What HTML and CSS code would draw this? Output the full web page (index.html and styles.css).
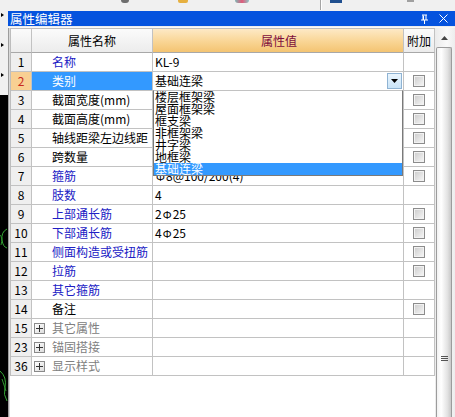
FILE: index.html
```html
<!DOCTYPE html>
<html lang="zh-CN">
<head>
<meta charset="utf-8">
<title>属性编辑器</title>
<link rel="stylesheet" href="styles.css">
</head>
<body>
<div class="topbar">
  <span class="tb-frag frag-a"></span>
  <span class="tb-frag frag-b"></span>
  <span class="tb-frag frag-c"></span>
  <span class="tb-sep"></span>
  <span class="tb-frag frag-d"></span>
  <span class="tb-frag frag-e"></span>
</div>
<div class="main">
  <div class="leftstrip">
    <div class="ls-gray">
      <svg width="8" height="84" viewBox="0 0 8 84"><path d="M1 2 L4 4 L1 6 Z M1 32 L4 34 L1 36 Z M1 62 L4 64 L1 66 Z" fill="#000"/></svg>
    </div>
    <div class="ls-black">
      <svg width="8" height="322" viewBox="0 0 8 322"><path d="M7 134 Q1 137 2 145 Q3 152 7 153" stroke="#35a835" fill="none"/><path d="M0 140 Q3 143 1 150" stroke="#2c8f2c" fill="none"/><path d="M0 276 Q7 282 5 292 Q3 300 7 306" stroke="#35a835" fill="none"/><path d="M2 284 L6 296" stroke="#2c8f2c" fill="none"/></svg>
    </div>
  </div>
  <div class="panel">
    <div class="titlebar">
      <span class="title">属性编辑器</span>
      <svg class="tb-pin" width="9" height="10" viewBox="0 0 9 10"><path d="M2 1 H7 M3 1 V6 M6 1 V6 M1 6 H8 M4.5 6 V10" stroke="#fff" fill="none"/><path d="M3 2 H4 V6 H3 Z" fill="#fff"/></svg>
      <svg class="tb-close" width="9" height="9" viewBox="0 0 9 9"><path d="M0.5 0.5 L8.5 8.5 M8.5 0.5 L0.5 8.5" stroke="#fff" stroke-width="1"/></svg>
    </div>
    <div class="sep"></div>
    <div class="content">
      <div class="gridwrap">
        <div class="grid">
          <div class="row head">
            <div class="c num"></div>
            <div class="c name hc">属性名称</div>
            <div class="c val hv">属性值</div>
            <div class="c add hc">附加</div>
          </div>
          <div class="row"><div class="c num">1</div><div class="c name blue">名称</div><div class="c val">KL-9</div><div class="c add"></div></div>
          <div class="row"><div class="c num cur">2</div><div class="c name sel">类别</div><div class="c val"><span>基础连梁</span><span class="ddbtn"><svg width="7" height="4" viewBox="0 0 7 4"><path d="M0 0 H7 L3.5 4 Z" fill="#000"/></svg></span></div><div class="c add"><span class="cb"></span></div></div>
          <div class="row"><div class="c num">3</div><div class="c name">截面宽度(mm)</div><div class="c val"></div><div class="c add"><span class="cb"></span></div></div>
          <div class="row"><div class="c num">4</div><div class="c name">截面高度(mm)</div><div class="c val"></div><div class="c add"><span class="cb"></span></div></div>
          <div class="row"><div class="c num">5</div><div class="c name">轴线距梁左边线距</div><div class="c val"></div><div class="c add"><span class="cb"></span></div></div>
          <div class="row"><div class="c num">6</div><div class="c name">跨数量</div><div class="c val"></div><div class="c add"><span class="cb"></span></div></div>
          <div class="row"><div class="c num">7</div><div class="c name blue">箍筋</div><div class="c val"><span class="bar">Φ</span>8@100/200(4)</div><div class="c add"><span class="cb"></span></div></div>
          <div class="row"><div class="c num">8</div><div class="c name blue">肢数</div><div class="c val">4</div><div class="c add"></div></div>
          <div class="row"><div class="c num">9</div><div class="c name blue">上部通长筋</div><div class="c val">2<span class="bar">Φ</span>25</div><div class="c add"><span class="cb"></span></div></div>
          <div class="row"><div class="c num">10</div><div class="c name blue">下部通长筋</div><div class="c val">4<span class="bar">Φ</span>25</div><div class="c add"><span class="cb"></span></div></div>
          <div class="row"><div class="c num">11</div><div class="c name blue">侧面构造或受扭筋</div><div class="c val"></div><div class="c add"><span class="cb"></span></div></div>
          <div class="row"><div class="c num">12</div><div class="c name blue">拉筋</div><div class="c val"></div><div class="c add"><span class="cb"></span></div></div>
          <div class="row"><div class="c num">13</div><div class="c name blue">其它箍筋</div><div class="c val"></div><div class="c add"></div></div>
          <div class="row"><div class="c num">14</div><div class="c name">备注</div><div class="c val"></div><div class="c add"><span class="cb"></span></div></div>
          <div class="row"><div class="c num">15</div><div class="c name grp"><span class="plus"></span>其它属性</div><div class="c val"></div><div class="c add"></div></div>
          <div class="row"><div class="c num">23</div><div class="c name grp"><span class="plus"></span>锚固搭接</div><div class="c val"></div><div class="c add"></div></div>
          <div class="row"><div class="c num">36</div><div class="c name grp"><span class="plus"></span>显示样式</div><div class="c val"></div><div class="c add"></div></div>
        </div>
        <ul class="dropdown">
          <li>楼层框架梁</li>
          <li>屋面框架梁</li>
          <li>框支梁</li>
          <li>非框架梁</li>
          <li>井字梁</li>
          <li>地框梁</li>
          <li class="hl">基础连梁</li>
        </ul>
      </div>
      <div class="scrollbar">
        <div class="sb-up"><svg width="7" height="4" viewBox="0 0 7 4"><path d="M0 4 H7 L3.5 0 Z" fill="#444"/></svg></div>
        <div class="sb-thumb"><div class="grip"></div></div>
      </div>
    </div>
  </div>
</div>
</body>
</html>
```
FILE: styles.css
```css
* { box-sizing: border-box; }
html, body { margin: 0; padding: 0; }
body {
  width: 455px;
  height: 417px;
  overflow: hidden;
  background: #f0f0f0;
  font-family: "Noto Sans CJK SC", "Noto Sans", sans-serif;
  font-size: 12px;
  color: #000;
}

/* toolbar remnants */
.topbar {
  height: 11px;
  display: flex;
  align-items: flex-start;
  background: #f0f0f0;
}
.tb-frag { display: block; height: 3px; }
.frag-a { margin-left: 121px; width: 8px; background: #6e6e6e; border-radius: 0 0 3px 3px; }
.frag-b { margin-left: 49px; width: 10px; background: #e6b040; border-radius: 0 0 2px 2px; }
.frag-c { margin-left: 47px; width: 14px; background: linear-gradient(to right, #7fb7b5, #e05a7a 50%, #8cc6c6); border-radius: 0 0 3px 3px; }
.tb-sep { display: block; margin-left: 71px; width: 2px; height: 10px; border-left: 1px solid #a5a5a5; border-right: 1px solid #fff; }
.frag-d { margin-left: 8px; width: 12px; background: #1f4f8f; }
.frag-e { margin-left: 65px; width: 7px; height: 2px; background: #a0a0a0; }

.main { display: flex; height: 406px; }

.leftstrip { width: 8px; display: flex; flex-direction: column; }
.ls-gray { height: 84px; background: #f0f0f0; }
.ls-black { flex: 1; background: #000; }
.leftstrip svg { display: block; }

.panel { flex: 1; display: flex; flex-direction: column; }

.titlebar {
  height: 15px;
  background: #0553de;
  color: #fff;
  display: flex;
  align-items: center;
  padding-left: 2px;
  font-size: 12.5px;
  line-height: 15px;
}
.titlebar .title { flex: 1; }
.tb-pin { margin-right: 10px; }
.tb-close { margin-right: 7px; }

.sep { height: 2px; background: #ececec; border-bottom: 1px solid #f8f8f8; }

.content {
  flex: 1;
  display: flex;
  background: #fff;
  border-left: 1px solid #9c9c9c;
  padding-left: 1px;
  box-shadow: inset 1px 0 #d8d8d8;
}

.gridwrap { position: relative; width: 425px; flex: none; }
.grid { border-left: 1px solid #bdbdbd; border-top: 1px solid #bdbdbd; }

.row {
  display: grid;
  grid-template-columns: 21px 121px 251px 31px;
  height: 19px;
}
.row.head { height: 24px; }

.c {
  border-right: 1px solid #c2c2c2;
  border-bottom: 1px solid #c2c2c2;
  display: flex;
  align-items: center;
  white-space: nowrap;
  overflow: hidden;
  line-height: 18px;
}

.head .c {
  background: linear-gradient(#fbfbfb, #ececec);
  border-bottom-color: #a8a8a8;
  justify-content: center;
}
.head .c.name { padding-left: 0; }
.head .hv {
  background: linear-gradient(#fde9c6, #f9d594 55%, #f4c472);
  color: #7d0c3c;
}

.num {
  justify-content: center;
  background: #efefef;
  font-size: 12px;
}
.num.cur { background: #f8d093; color: #c8281e; }

.name { padding-left: 20px; }
.name.blue { color: #2020c4; }
.name.sel { background: #3399ff; color: #fff; }
.name.grp { padding-left: 2px; color: #808080; }

.val { padding-left: 2px; }
.bar { display: inline-block; width: 11px; text-align: center; font-size: 11px; }

.ddbtn {
  margin-left: auto;
  margin-right: 1px;
  width: 15px;
  height: 16px;
  border: 1px solid #8fb3d3;
  background: linear-gradient(#eaf5fd, #c9e4f8);
  display: flex;
  align-items: center;
  justify-content: center;
}
.ddbtn svg { display: block; }

.add { justify-content: center; }
.cb {
  width: 12px;
  height: 12px;
  border: 1px solid #8c8c8c;
  background: linear-gradient(135deg, #cbcbcb, #f7f7f7);
  box-shadow: inset 0 0 0 1px #f2f2f2;
}

.plus {
  width: 11px;
  height: 11px;
  margin-right: 7px;
  border: 1px solid #8a8a8a;
  background: linear-gradient(135deg, #ffffff, #dcdcdc);
  position: relative;
}
.plus::before, .plus::after {
  content: "";
  position: absolute;
  background: #333;
}
.plus::before { left: 1px; right: 1px; top: 4px; height: 1px; }
.plus::after { top: 1px; bottom: 1px; left: 4px; width: 1px; }

/* drop-down list overlaying the grid */
.dropdown {
  position: absolute;
  left: 143px;
  top: 62px;
  width: 250px;
  margin: 0;
  padding: 0;
  list-style: none;
  background: #fff;
  border: 1px solid #7a7a7a;
  border-top-color: #c2c2c2;
}
.dropdown li {
  height: 12px;
  line-height: 12px;
  padding-left: 1px;
  white-space: nowrap;
}
.dropdown li.hl { background: #3399ff; color: #fff; }

/* scrollbar */
.scrollbar {
  width: 20px;
  display: flex;
  flex-direction: column;
  background: linear-gradient(to right, #ebebeb, #f9f9f9 60%, #ededed);
}
.sb-up {
  height: 19px;
  display: flex;
  align-items: center;
  justify-content: center;
  padding-right: 2px;
}
.sb-up svg { display: block; }
.sb-thumb {
  flex: 1;
  margin: 0 3px 0 1px;
  border: 1px solid #9c9c9c;
  border-bottom: none;
  border-radius: 2px 2px 0 0;
  background: linear-gradient(to right, #f2f2f2, #ffffff 30%, #e2e2e2 75%, #c9c9c9);
  padding-top: 308px;
}
.grip {
  margin: 0 auto;
  width: 7px;
  height: 6px;
  background: repeating-linear-gradient(#555 0 1px, transparent 1px 2px);
}
```
